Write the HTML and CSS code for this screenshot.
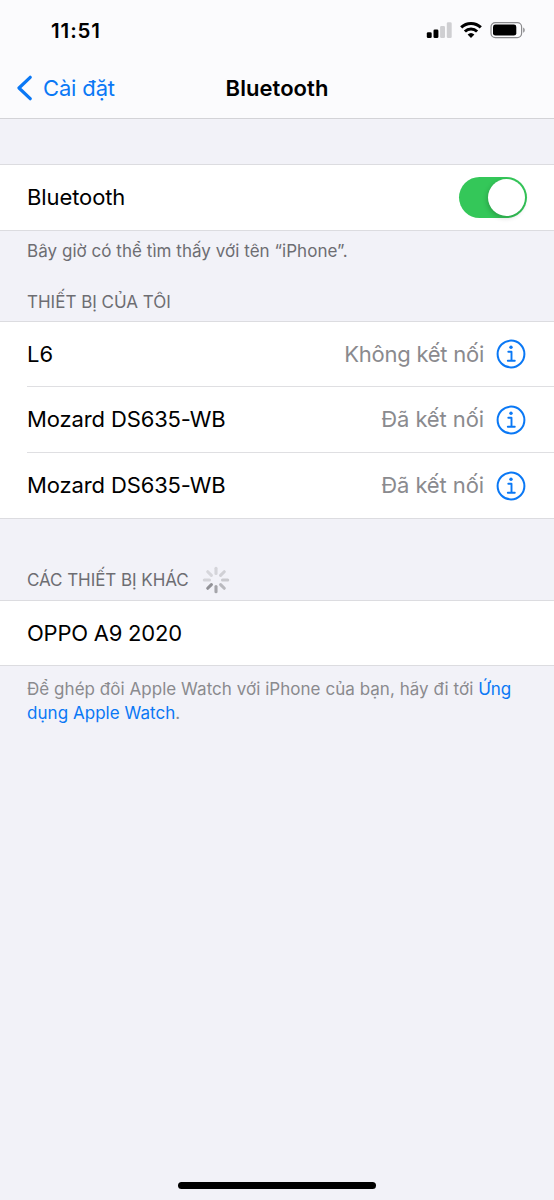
FILE: index.html
```html
<!DOCTYPE html>
<html lang="vi">
<head>
<meta charset="utf-8">
<title>Bluetooth</title>
<link rel="stylesheet" href="styles.css">
</head>
<body>
<div class="screen">
  <header class="header">
    <div class="status">
      <span class="time">11:51</span>
      <svg class="indicators" width="100" height="18" viewBox="0 0 100 18">
        <rect x="0.800" y="11.300" width="4.900" height="5.700" rx="1.3"/>
        <rect x="7.500" y="8.500" width="4.900" height="8.500" rx="1.3"/>
        <g fill="#cfcfd2"><rect x="14.100" y="5" width="4.900" height="12" rx="1.3"/><rect x="20.800" y="1.3" width="4.900" height="15.7" rx="1.3"/></g>
        <g fill="none" stroke="#000" stroke-width="3"><path d="M35.2 6.4a14 14 0 0 1 19.6 0"/><path d="M38.9 10.5a8.7 8.7 0 0 1 12.2 0"/></g>
        <path d="M41.6 13.5a5 5 0 0 1 6.8 0L45 16.9z"/>
        <rect x="65" y="1.6" width="30.6" height="15" rx="4.3" fill="none" stroke="#8b8b8e" stroke-width="1.2"/>
        <rect x="67" y="3.600" width="23.3" height="11" rx="2.4"/>
        <path d="M97.2 6.5c2 .7 2 4.500 0 5.200z" fill="#8b8b8e"/>
      </svg>
    </div>
    <nav class="nav">
      <a class="back"><svg width="16" height="26" viewBox="0 0 16 26"><path d="M14.200 2.300L3 13l11.200 10.700" fill="none" stroke="#0a78f5" stroke-width="3.200" stroke-linecap="round" stroke-linejoin="round"/></svg><span class="back-label">Cài đặt</span></a>
      <h1 class="title">Bluetooth</h1>
    </nav>
  </header>
  <main class="content">
    <section class="group">
      <div class="row"><span class="name bt">Bluetooth</span><span class="switch"><span class="knob"></span></span></div>
    </section>
    <p class="note found">Bây giờ có thể tìm thấy với tên “iPhone”.</p>
    <h2 class="heading mine">THIẾT BỊ CỦA TÔI</h2>
    <section class="group devices">
      <div class="row"><span class="name">L6</span><span class="state far">Không kết nối</span><svg class="info" viewBox="0 0 30 30"><use href="#info"/></svg></div>
      <div class="row"><span class="name mozard">Mozard DS635-WB</span><span class="state">Đã kết nối</span><svg class="info" viewBox="0 0 30 30"><use href="#info"/></svg></div>
      <div class="row"><span class="name mozard">Mozard DS635-WB</span><span class="state">Đã kết nối</span><svg class="info" viewBox="0 0 30 30"><use href="#info"/></svg></div>
    </section>
    <div class="heading-row">
      <h2 class="heading others">CÁC THIẾT BỊ KHÁC</h2>
      <svg class="spinner" width="28" height="28" viewBox="-14 -14 28 28" stroke-width="3.100" stroke-linecap="round">
        <path d="M0-6.500V-11.700" stroke="#d4d4d9"/>
        <path d="M0-6.500V-11.700" stroke="#d0d0d5" transform="rotate(45)"/>
        <path d="M0-6.500V-11.700" stroke="#c9c9ce" transform="rotate(90)"/>
        <path d="M0-6.500V-11.700" stroke="#b9b9be" transform="rotate(135)"/>
        <path d="M0-6.500V-11.700" stroke="#a5a5aa" transform="rotate(180)"/>
        <path d="M0-6.500V-11.700" stroke="#929297" transform="rotate(225)"/>
        <path d="M0-6.500V-11.700" stroke="#d4d4d9" transform="rotate(270)"/>
        <path d="M0-6.500V-11.700" stroke="#d6d6db" transform="rotate(315)"/>
      </svg>
    </div>
    <section class="group last">
      <div class="row"><span class="name oppo">OPPO A9 2020</span></div>
    </section>
    <p class="note watch"><span class="line1">Để ghép đôi Apple Watch với iPhone của bạn, hãy đi tới <a>Ứng</a></span><br><span class="line2"><a>dụng Apple Watch</a>.</span></p>
  </main>
  <div class="home"></div>
</div>
<svg width="0" height="0" class="defs"><defs><g id="info" fill="none" stroke="#0a78f5">
  <circle cx="15" cy="15" r="13.400" stroke-width="2"/>
  <circle cx="15" cy="8.200" r="1.700" fill="#0a78f5" stroke="none"/>
  <path d="M12.300 12.700h3.200v9M11.800 21.800h7" stroke-width="1.900" stroke-linecap="round" stroke-linejoin="round"/>
</g></defs></svg>
</body>
</html>
```
FILE: styles.css
```css
* { box-sizing: border-box; }
body { margin: 0; font-family: Inter, "Noto Sans", sans-serif; font-size: 22px; color: #000; background: #f2f2f8; }
h1, h2, p { margin: 0; font-weight: 400; }
.screen { height: 1200px; display: flex; flex-direction: column; overflow: hidden; }
.defs { position: absolute; }
.header { height: 119px; background: #fbfbfd; border-bottom: 1px solid #d3d3d7; }
.status { height: 60px; padding: 0 28px 0 51px; display: flex; justify-content: space-between; align-items: center; }
.time { font-size: 20.5px; font-weight: 600; letter-spacing: 0.9px; }
.nav { height: 58px; padding: 0 16px 2px; display: grid; grid-template-columns: 1fr auto 1fr; align-items: center; }
.back { display: flex; align-items: center; gap: 11px; color: #0a78f5; }
.title { font-size: 22px; font-weight: 600; letter-spacing: 0.05px; }
.back-label { letter-spacing: -0.15px; }
.content { flex: 1; padding-top: 45px; }
.group { background: #fff; border: solid #dcdce0; border-width: 1px 0; }
.row { height: 65px; padding: 0 27px; display: flex; align-items: center; }
.devices .row { height: 64px; padding-right: 28px; }
.devices .row + .row { height: 66px; padding-top: 1px; background: linear-gradient(#dfdfe2, #dfdfe2) 27px 0 / 100% 1px no-repeat; }
.last .row { height: 64px; }
.name { flex: 1; white-space: nowrap; padding-bottom: 1px; }
.bt { letter-spacing: -0.1px; }
.mozard { letter-spacing: -0.13px; }
.oppo { letter-spacing: -0.23px; }
.state { color: #8a8a8e; padding-bottom: 1px; letter-spacing: -0.1px; }
.far { letter-spacing: -0.25px; }
.info { width: 30px; height: 30px; margin-left: 12px; }
.switch { width: 68px; height: 41px; border-radius: 21px; background: #34c759; padding: 2px; display: flex; justify-content: flex-end; }
.knob { width: 37px; height: 37px; border-radius: 50%; background: #fff; box-shadow: -1px 2px 5px rgba(0,0,0,.2); }
.note { padding: 0 27px; font-size: 17px; line-height: 24px; color: #6d6d72; white-space: nowrap; letter-spacing: 0.04px; }
.found { padding-top: 8px; height: 59px; }
.heading { font-size: 17px; line-height: 24px; color: #6d6d72; white-space: nowrap; }
.mine { padding: 0 27px; height: 31px; }
.others { letter-spacing: -0.06px; }
.heading-row { height: 81px; padding: 41px 27px 0; display: flex; align-items: center; gap: 13px; }
.watch { padding-top: 11px; color: #8a8a8e; }
.watch a { color: #0a78f5; }
.home { width: 198px; height: 7px; margin: 0 auto 11px; border-radius: 4px; background: #000; }
```
